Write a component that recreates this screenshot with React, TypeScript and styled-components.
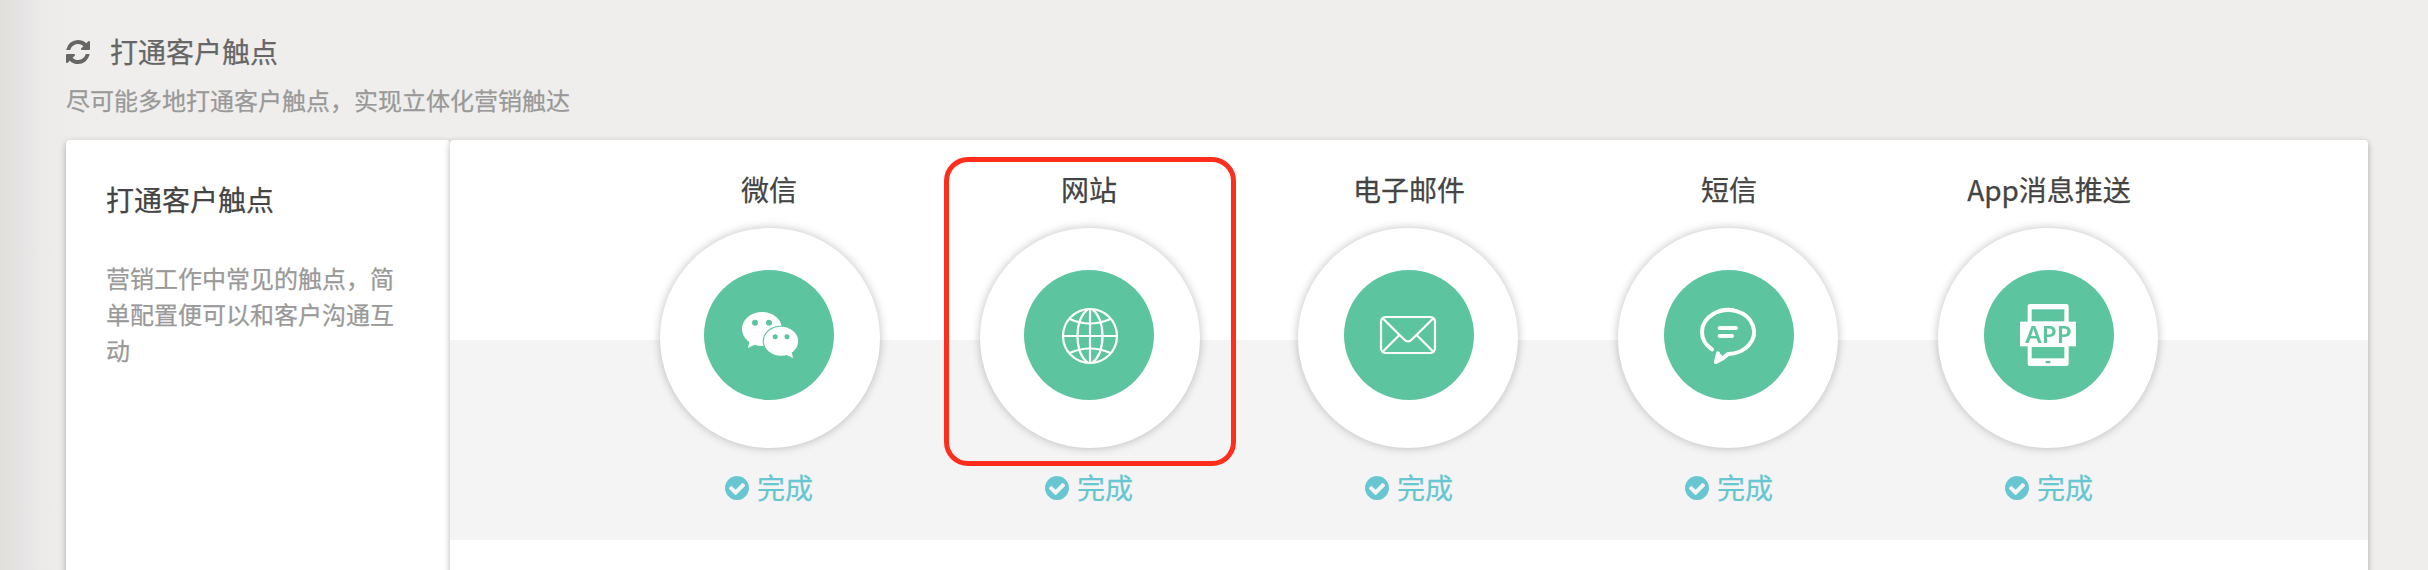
import React from 'react';
import styled, { createGlobalStyle } from 'styled-components';

const GREEN = '#5cc5a0';

const GlobalStyle = createGlobalStyle`
  * { box-sizing: border-box; }
  body {
    margin: 0;
    background: #efeeec;
    font-family: "Noto Sans CJK SC", sans-serif;
    -webkit-text-stroke: 0.25px currentColor;
    overflow: hidden;
  }
  h1, h2, h3, p { margin: 0; font-weight: 400; }
`;

const Page = styled.main`
  height: 570px;
  padding: 32px 60px 0 66px;
  overflow: hidden;
  background: linear-gradient(to right, #e0dfdc 0, #e7e5e5 26px, #ebeae8 40px, #efeeec 80px);
`;

const Heading = styled.header`
  display: flex;
  align-items: center;
  gap: 20px;
  height: 40px;
  color: #666;
  svg { display: block; fill: currentColor; }
`;

const Title = styled.h1`
  padding-bottom: 2px;
  font-size: 28px;
  line-height: 38px;
`;

const Subtitle = styled.p`
  margin-top: 10px;
  font-size: 24px;
  line-height: 36px;
  color: #999;
`;

const Board = styled.section`
  display: flex;
  height: 460px;
  margin-top: 22px;
`;

const Panel = styled.div`
  background: #fff;
  border-radius: 4px;
  box-shadow: 0 2px 6px rgba(0, 0, 0, 0.3);
`;

const Intro = styled(Panel)`
  width: 384px;
  padding: 39px 40px;
`;

const IntroTitle = styled.h2`
  font-size: 28px;
  line-height: 40px;
  color: #444;
`;

const IntroText = styled.p`
  margin-top: 41px;
  font-size: 24px;
  line-height: 36px;
  color: #999;
`;

const Channels = styled(Panel)`
  display: flex;
  flex: 1;
  padding-left: 159px;
  background: linear-gradient(#fff 200px, #f4f4f4 200px, #f4f4f4 400px, #fff 400px);
`;

const Channel = styled.article`
  position: relative;
  display: flex;
  flex-direction: column;
  align-items: center;
  width: 320px;
  padding-top: 29px;
`;

const ChannelName = styled.h3`
  font-size: 28px;
  line-height: 40px;
  color: #444;
`;

const Ring = styled.div<{ $shift: number }>`
  width: 220px;
  height: 220px;
  margin: 19px ${p => -p.$shift}px 0 ${p => p.$shift}px;
  padding: 42px 0 0 ${p => 45 - p.$shift}px;
  border-radius: 50%;
  background: #fff;
  box-shadow: 0 0 10px rgba(0, 0, 0, 0.25);
`;

const Disc = styled.div`
  width: 130px;
  height: 130px;
  border-radius: 50%;
  background: ${GREEN};
  svg { display: block; }
`;

const Status = styled.div`
  display: flex;
  align-items: center;
  gap: 8px;
  margin-top: 20px;
  font-size: 28px;
  color: #67c6d1;
  svg { display: block; fill: currentColor; }
`;

const StatusLabel = styled.span`
  padding-bottom: 2px;
  line-height: 38px;
`;

const Highlight = styled.div`
  position: absolute;
  top: 17px;
  left: 15px;
  width: 292px;
  height: 309px;
  border: 5px solid #ff2d1c;
  border-radius: 24px;
`;

const Glyph = ({ children }: { children: React.ReactNode }) => (
  <svg width="130" height="130" viewBox="0 0 390 390" fill="none" stroke="#fff" strokeWidth="6.600">
    {children}
  </svg>
);

const RefreshIcon = () => (
  <svg width="24" height="24" viewBox="0 0 1536 1536">
    <path d="M1511 928q0 5-1 7-64 268-268 434.500t-478 166.500q-146 0-282.500-55t-243.500-157l-129 129q-19 19-45 19t-45-19-19-45v-448q0-26 19-45t45-19h448q26 0 45 19t19 45-19 45l-137 137q71 66 161 102t187 36q134 0 250-65t186-179q11-17 53-117 8-23 30-23h192q13 0 22.500 9.500t9.500 22.500zm25-800v448q0 26-19 45t-45 19h-448q-26 0-45-19t-19-45 19-45l138-138q-148-137-349-137-134 0-250 65t-186 179q-11 17-53 117-8 23-30 23h-199q-13 0-22.500-9.500t-9.500-22.500v-7q65-268 270-434.500t480-166.500q146 0 284 55.500t245 156.500l130-129q19-19 45-19t45 19 19 45z" />
  </svg>
);

const CheckIcon = () => (
  <svg width="24" height="24" viewBox="0 0 1536 1536">
    <path d="M1284 606q0-28-18-46l-91-90q-19-19-45-19t-45 19l-408 407-226-226q-19-19-45-19t-45 19l-91 90q-18 18-18 46 0 27 18 45l362 362q19 19 45 19 27 0 46-19l543-543q18-18 18-45zm252 162q0 209-103 385.500t-279.500 279.500-385.500 103-385.500-103-279.500-279.500-103-385.500 103-385.500 279.500-279.500 385.500-103 385.500 103 279.500 279.500 103 385.500z" />
  </svg>
);

const WechatIcon = () => (
  <Glyph>
    <g fill="#fff" stroke="none">
      <ellipse cx="174" cy="177" rx="60" ry="51" />
      <path d="M138 208 L132 234 L158 221 Z" />
      <ellipse cx="231" cy="214" rx="55" ry="47" fill={GREEN} />
      <ellipse cx="231" cy="214" rx="51.500" ry="43.500" />
      <path d="M246 254 L267 264 L262 240 Z" />
    </g>
    <g fill={GREEN} stroke="none">
      <circle cx="153" cy="158.500" r="9" />
      <circle cx="195" cy="158.500" r="9" />
      <circle cx="213.500" cy="200" r="7.500" />
      <circle cx="249" cy="200" r="7.500" />
    </g>
  </Glyph>
);

const GlobeIcon = () => (
  <Glyph>
    <circle cx="198" cy="198" r="81" />
    <path d="M198 117 V279 M117 198 H279" />
    <path d="M192 117 C150 150 150 246 192 279 M204 117 C246 150 246 246 204 279" />
    <path d="M137 147 Q198 174 259 147 M137 249 Q198 222 259 249" />
  </Glyph>
);

const MailIcon = () => (
  <Glyph>
    <rect x="111" y="141" width="162" height="108" rx="14" />
    <path d="M116 145 L178 206 Q192 222 206 206 L268 145 M116 245 L167 194 M268 245 L217 194" />
  </Glyph>
);

const SmsIcon = () => (
  <Glyph>
    <g strokeWidth="12" strokeLinecap="round" strokeLinejoin="round">
      <path d="M144 238 A78 66 0 1 1 192 252 Q176 268 156 276 L162 250" />
      <path d="M156 276 L168 258" />
      <path d="M167 174 H216 M167 198 H204" />
    </g>
  </Glyph>
);

const AppIcon = () => (
  <Glyph>
    <defs>
      <filter id="soft" x="-10%" y="-10%" width="120%" height="120%">
        <feGaussianBlur stdDeviation="2" />
      </filter>
    </defs>
    <rect x="131" y="102" width="123" height="186" rx="7" fill="#fff" stroke="none" />
    <rect x="108" y="155" width="168" height="74" fill="#fff" stroke="none" />
    <g filter="url(#soft)" fill={GREEN} stroke="none">
      <rect x="143" y="118" width="98" height="36" />
      <rect x="143" y="231" width="98" height="34" />
      <rect x="185" y="273" width="14" height="7" />
      <text x="124" y="218" fontSize="69" fontWeight="600" fontFamily="'Noto Sans', sans-serif" textLength="139" lengthAdjust="spacingAndGlyphs">APP</text>
    </g>
  </Glyph>
);

const channels = [
  { name: '微信', icon: <WechatIcon />, shift: 1 },
  { name: '网站', icon: <GlobeIcon />, shift: 1, active: true },
  { name: '电子邮件', icon: <MailIcon />, shift: -1 },
  { name: '短信', icon: <SmsIcon />, shift: -1 },
  { name: 'App消息推送', icon: <AppIcon />, shift: -1 },
];

export default function App() {
  return (
    <>
      <GlobalStyle />
      <Page>
        <Heading>
          <RefreshIcon />
          <Title>打通客户触点</Title>
        </Heading>
        <Subtitle>尽可能多地打通客户触点，实现立体化营销触达</Subtitle>
        <Board>
          <Intro>
            <IntroTitle>打通客户触点</IntroTitle>
            <IntroText>营销工作中常见的触点，简单配置便可以和客户沟通互动</IntroText>
          </Intro>
          <Channels>
            {channels.map(c => (
              <Channel key={c.name}>
                <ChannelName>{c.name}</ChannelName>
                <Ring $shift={c.shift}>
                  <Disc>{c.icon}</Disc>
                </Ring>
                <Status>
                  <CheckIcon />
                  <StatusLabel>完成</StatusLabel>
                </Status>
                {c.active && <Highlight />}
              </Channel>
            ))}
          </Channels>
        </Board>
      </Page>
    </>
  );
}
